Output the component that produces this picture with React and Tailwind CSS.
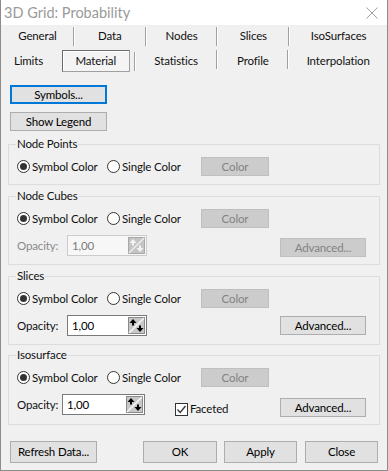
const FONT = { fontFamily: 'Lato, "Liberation Sans", Arial, sans-serif' }

function Radio({ checked, label, width }) {
  return (
    <div className="flex items-center gap-[2px]" style={{ width }}>
      <span className="flex h-[13px] w-[13px] shrink-0 items-center justify-center rounded-full border border-[#333] bg-white">
        {checked && <span className="h-[7px] w-[7px] rounded-full bg-[#333]" />}
      </span>
      <span className="whitespace-nowrap">{label}</span>
    </div>
  )
}

function Btn({ children, className = '', disabled, focused }) {
  return (
    <div
      className={`flex items-center justify-center border ${
        disabled
          ? 'border-[#bfbfbf] bg-[#cccccc] text-[#838383]'
          : focused
          ? 'border-[#0078d7] bg-[#e1e1e1] shadow-[inset_0_0_0_1px_#0078d7] text-black'
          : 'border-[#adadad] bg-[#e1e1e1] text-black'
      } ${className}`}
    >
      {children}
    </div>
  )
}

function Spinner({ disabled }) {
  const arrow = disabled ? '#f4f4f4' : '#000'
  return (
    <svg width="17" height="17" viewBox="0 0 17 17">
      <rect x="0.5" y="0.5" width="16" height="16" fill={disabled ? '#c4c4c4' : '#c8c8c8'} stroke={disabled ? '#a8a8a8' : '#8a8a8a'} />
      <line x1="16" y1="1" x2="1" y2="16" stroke={disabled ? '#ededed' : '#f8f8f8'} strokeWidth="1.5" />
      <path d="M5 2 L8.5 6 L6 6 L6 8.5 L4 8.5 L4 6 L1.5 6 Z" fill={arrow} />
      <path d="M12 15 L15.5 11 L13 11 L13 8.5 L11 8.5 L11 11 L8.5 11 Z" fill={arrow} />
    </svg>
  )
}

function NumInput({ disabled, className = '' }) {
  return (
    <div
      className={`flex h-[21px] shrink-0 items-center justify-between border pl-[4px] pr-[1px] ${
        disabled ? 'border-[#cccccc] bg-[#f7f7f7] text-[#7a7a7a]' : 'border-[#7a7a7a] bg-white text-black'
      } ${className}`}
    >
      <span>1,00</span>
      <Spinner disabled={disabled} />
    </div>
  )
}

function Group({ title, children, className = '' }) {
  return (
    <div className={`relative ml-[7px] w-[372px] border border-[#dcdcdc] pl-[8px] pr-[13px] pt-[12px] ${className}`}>
      <span className="absolute -top-[9px] left-[7px] bg-[#f0f0f0] px-[1px] leading-[16px]">{title}</span>
      {children}
    </div>
  )
}

function ColorRow() {
  return (
    <div className="flex h-[19px] items-center">
      <Radio checked label="Symbol Color" width={90} />
      <Radio label="Single Color" width={94} />
      <Btn disabled className="h-[19px] w-[68px]">Color</Btn>
    </div>
  )
}

const TAB_ROW1 = [
  ['General', 73],
  ['Data', 72],
  ['Nodes', 72],
  ['Slices', 72],
  ['IsoSurfaces', 97],
]

function Sep() {
  return <span className="h-[19px] w-[2px] border-l border-[#a0a0a0] border-r border-r-white" />
}

export default function App() {
  return (
    <div className="h-[471px] w-[388px] overflow-hidden border-x border-b border-[#8c8c8c] bg-[#f0f0f0] text-[11.5px] tracking-[-0.15px] text-[#111]" style={FONT}>
      <div className="flex h-[25px] items-center justify-between bg-white pl-[3px] pr-[9px] text-[#9a9a9a]">
        <span className="text-[14.5px] tracking-normal">3D Grid: Probability</span>
        <svg width="12" height="12" viewBox="0 0 12 12">
          <path d="M0.5 0.5 L11.5 11.5 M11.5 0.5 L0.5 11.5" stroke="#a0a0a0" strokeWidth="1" />
        </svg>
      </div>

      <div className="flex h-[22px] items-center pl-[1px]">
        {TAB_ROW1.map(([t, w], i) => (
          <div key={t} className="flex items-center" style={{ width: w }}>
            <span className="flex-1 text-center">{t}</span>
            {i < TAB_ROW1.length - 1 && <Sep />}
          </div>
        ))}
      </div>

      <div className="flex h-[26px] items-start pt-[3px]">
        <div className="flex h-[22px] w-[61px] items-center justify-center pr-[6px]">Limits</div>
        <div className="flex h-[22px] w-[68px] items-center justify-center border border-t-[#6b6b6b] border-l-[#6b6b6b] border-b-[#a0a0a0] border-r-[#a0a0a0] bg-[#f4f4f4] shadow-[inset_1px_1px_0_#fff]">
          Material
        </div>
        <div className="flex h-[22px] items-center pl-[4px]"><Sep /></div>
        <div className="flex h-[22px] w-[81px] items-center justify-center">Statistics</div>
        <Sep />
        <div className="flex h-[22px] w-[69px] items-center justify-center">Profile</div>
        <Sep />
        <div className="flex h-[22px] w-[98px] items-center justify-center">Interpolation</div>
      </div>

      <Btn focused className="ml-[9px] mt-[12px] h-[19px] w-[97px]">Symbols...</Btn>
      <Btn className="ml-[9px] mt-[8px] h-[19px] w-[97px]">Show Legend</Btn>

      <Group title="Node Points" className="mt-[13px] h-[41px]">
        <ColorRow />
      </Group>

      <Group title="Node Cubes" className="mt-[11px] h-[69px]">
        <ColorRow />
        <div className="mt-[7px] flex h-[21px] items-center text-[#8a8a8a]">
          <span className="w-[50px]">Opacity:</span>
          <NumInput disabled className="w-[80px]" />
          <Btn disabled className="ml-auto mt-[4px] h-[19px] w-[86px]">Advanced...</Btn>
        </div>
      </Group>

      <Group title="Slices" className="mt-[11px] h-[69px]">
        <ColorRow />
        <div className="mt-[7px] flex h-[21px] items-center">
          <span className="w-[50px]">Opacity:</span>
          <NumInput className="w-[80px]" />
          <Btn className="ml-auto h-[19px] w-[86px]">Advanced...</Btn>
        </div>
      </Group>

      <Group title="Isosurface" className="mt-[10px] h-[70px]">
        <ColorRow />
        <div className="mt-[7px] flex h-[21px] items-center">
          <span className="w-[45px]">Opacity:</span>
          <NumInput className="w-[83px]" />
          <div className="ml-[30px] mt-[9px] flex items-center gap-[2px]">
            <span className="flex h-[13px] w-[13px] items-center justify-center border border-[#333] bg-white">
              <svg width="11" height="11" viewBox="0 0 11 11">
                <path d="M1.5 5.5 L4.2 8.5 L9.5 2" fill="none" stroke="#333" strokeWidth="1.3" />
              </svg>
            </span>
            <span>Faceted</span>
          </div>
          <Btn className="ml-auto mt-[6px] h-[19px] w-[86px]">Advanced...</Btn>
        </div>
      </Group>

      <div className="mt-[16px] flex h-[22px] pl-[9px]">
        <Btn className="h-[22px] w-[87px]">Refresh Data...</Btn>
        <Btn className="ml-[46px] h-[22px] w-[74px]">OK</Btn>
        <Btn className="ml-[7px] h-[22px] w-[73px]">Apply</Btn>
        <Btn className="ml-[8px] h-[22px] w-[73px]">Close</Btn>
      </div>
    </div>
  )
}
